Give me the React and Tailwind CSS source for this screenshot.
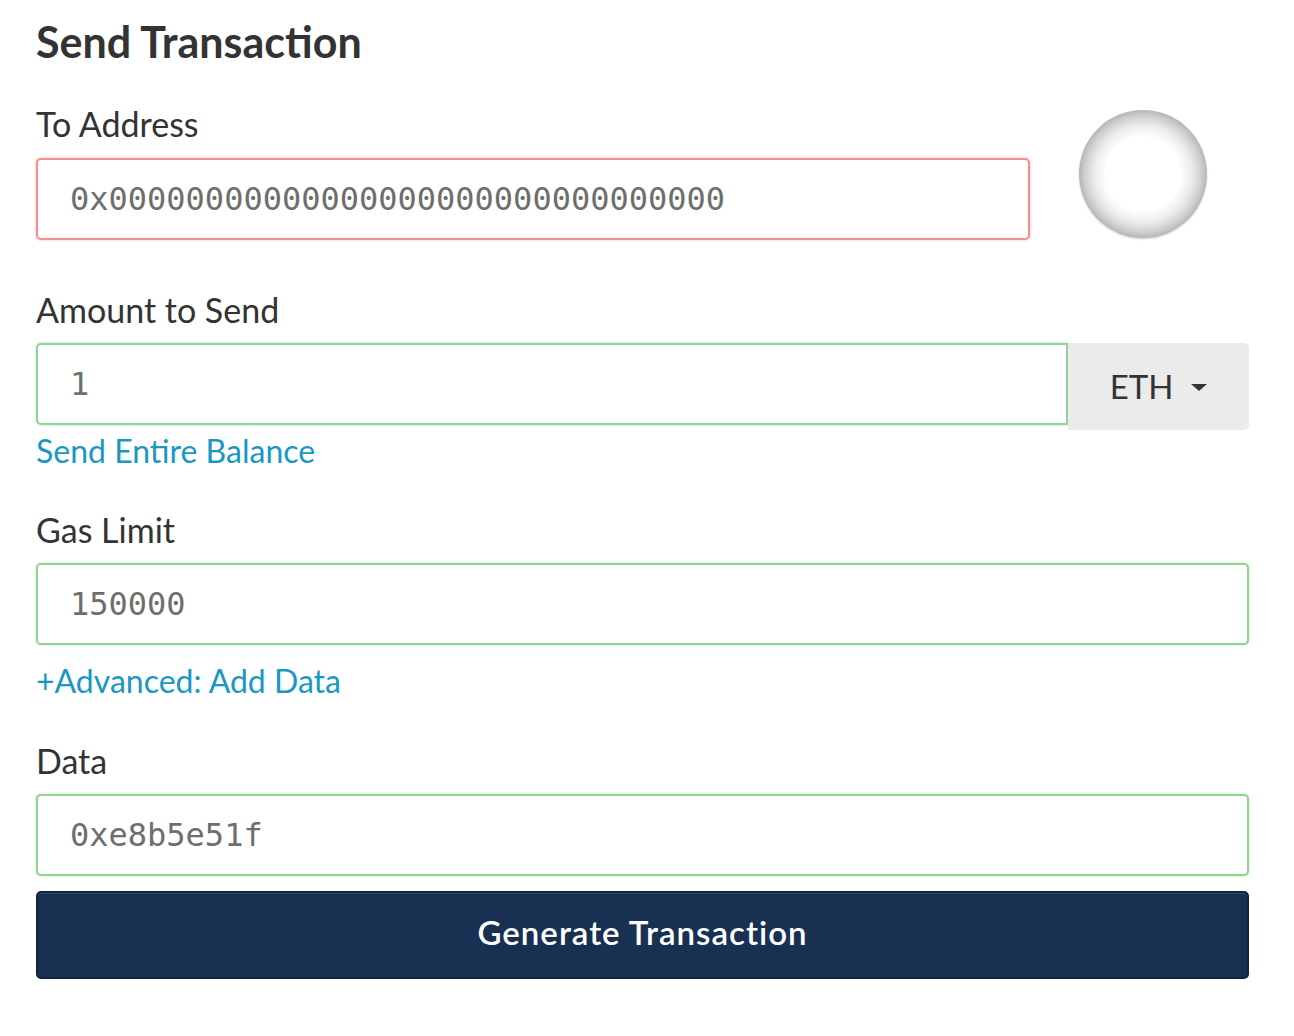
import React from 'react';

const Label = ({ children, className = '' }) => (
  <label className={`block text-[34px] leading-[33px] text-[#333] ${className}`}>{children}</label>
);

const Field = ({ value, tone = 'green', className = '' }) => {
  const border = tone === 'red'
    ? 'border-[#f4908b] shadow-[0_0_3px_rgba(244,144,139,0.6)]'
    : 'border-[#8fd48f] shadow-[0_0_3px_rgba(143,212,143,0.6)]';
  return (
    <div className={`h-[82px] flex items-center px-[32px] border-2 rounded-[5px] bg-white ${border} ${className}`}>
      <span className="font-['DejaVu_Sans_Mono',monospace] text-[32px] text-[#6e6e6e] leading-none">{value}</span>
    </div>
  );
};

const LinkText = ({ children, className = '' }) => (
  <a className={`block text-[32px] leading-[33px] text-[#1a97c3] cursor-pointer ${className}`}>{children}</a>
);

export default function App() {
  return (
    <div className="bg-white min-h-[1036px] font-['Lato',sans-serif]">
      <div className="w-[1249px] pl-[36px] pt-[21px]">
        <h1 className="text-[43px] leading-[42px] font-bold text-[#333]">Send Transaction</h1>

        {/* To Address */}
        <div className="flex items-start mt-[44px]">
          <div className="w-[994px]">
            <Label>To Address</Label>
            <Field value="0x00000000000000000000000000000000" tone="red" className="mt-[18px]" />
          </div>
          {/* identicon placeholder */}
          <div className="ml-[49px] mt-[3px] w-[128px] h-[128px] rounded-full bg-[radial-gradient(circle_closest-side_at_50%_50%,#ffffff_58%,#ececec_76%,#cdcdcd_92%,#b5b5b5_100%)] shadow-[0_1px_2px_rgba(0,0,0,0.2)]" />
        </div>

        {/* Amount */}
        <Label className="mt-[53px]">Amount to Send</Label>
        <div className="flex items-start mt-[17px]">
          <Field value="1" className="flex-1 rounded-r-none" />
          <button className="w-[181px] h-[87px] bg-[#ebebeb] rounded-r-[5px] flex items-center justify-center gap-[18px] text-[33px] text-[#333]">
            <span>ETH</span>
            <span className="w-0 h-0 border-l-[8px] border-r-[8px] border-t-[7px] border-l-transparent border-r-transparent border-t-[#333] mt-[2px]" />
          </button>
        </div>
        <LinkText className="mt-[4px]">Send Entire Balance</LinkText>

        {/* Gas */}
        <Label className="mt-[46px]">Gas Limit</Label>
        <Field value="150000" className="mt-[17px]" />
        <LinkText className="mt-[19px]">+Advanced: Add Data</LinkText>

        {/* Data */}
        <Label className="mt-[47px]">Data</Label>
        <Field value="0xe8b5e51f" className="mt-[17px]" />

        <button className="mt-[15px] w-full h-[88px] pb-[5px] bg-[#183153] border-2 border-[#10243d] rounded-[5px] text-white text-[33px] font-semibold tracking-[1px] shadow-[inset_0_1px_0_rgba(255,255,255,0.12)]">
          Generate Transaction
        </button>
      </div>
    </div>
  );
}
